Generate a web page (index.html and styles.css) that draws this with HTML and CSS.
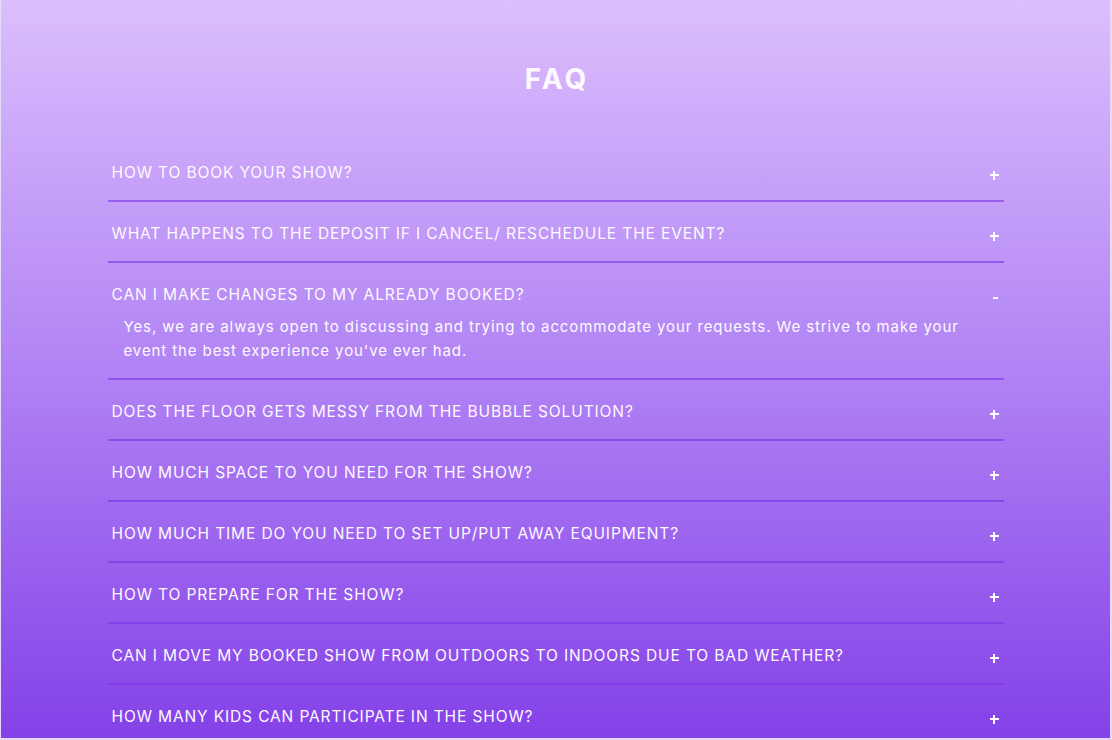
FILE: index.html
```html
<!DOCTYPE html>
<html lang="en">
<head>
<meta charset="utf-8">
<title>FAQ</title>
<link rel="stylesheet" href="styles.css">
</head>
<body>
<div class="page">
  <section class="faq">
    <h1 class="faq-title">FAQ</h1>
    <div class="faq-list">
      <div class="faq-item">
        <div class="faq-q"><span class="q-text">HOW TO BOOK YOUR SHOW?</span><span class="icon plus"></span></div>
      </div>
      <div class="faq-item">
        <div class="faq-q"><span class="q-text">WHAT HAPPENS TO THE DEPOSIT IF I CANCEL/ RESCHEDULE THE EVENT?</span><span class="icon plus"></span></div>
      </div>
      <div class="faq-item open">
        <div class="faq-q"><span class="q-text">CAN I MAKE CHANGES TO MY ALREADY BOOKED?</span><span class="icon minus"></span></div>
        <p class="faq-a">Yes, we are always open to discussing and trying to accommodate your requests. We strive to make your event the best experience you've ever had.</p>
      </div>
      <div class="faq-item">
        <div class="faq-q"><span class="q-text">DOES THE FLOOR GETS MESSY FROM THE BUBBLE SOLUTION?</span><span class="icon plus"></span></div>
      </div>
      <div class="faq-item">
        <div class="faq-q"><span class="q-text">HOW MUCH SPACE TO YOU NEED FOR THE SHOW?</span><span class="icon plus"></span></div>
      </div>
      <div class="faq-item">
        <div class="faq-q"><span class="q-text">HOW MUCH TIME DO YOU NEED TO SET UP/PUT AWAY EQUIPMENT?</span><span class="icon plus"></span></div>
      </div>
      <div class="faq-item">
        <div class="faq-q"><span class="q-text">HOW TO PREPARE FOR THE SHOW?</span><span class="icon plus"></span></div>
      </div>
      <div class="faq-item">
        <div class="faq-q"><span class="q-text">CAN I MOVE MY BOOKED SHOW FROM OUTDOORS TO INDOORS DUE TO BAD WEATHER?</span><span class="icon plus"></span></div>
      </div>
      <div class="faq-item">
        <div class="faq-q"><span class="q-text">HOW MANY KIDS CAN PARTICIPATE IN THE SHOW?</span><span class="icon plus"></span></div>
      </div>
    </div>
  </section>
</div>
</body>
</html>
```
FILE: styles.css
```css
* { box-sizing: border-box; }
html, body { margin: 0; padding: 0; }
body {
  font-family: "Inter", "Open Sans", "Liberation Sans", sans-serif;
  color: #fdf9ff;
  overflow: hidden;
}
.page {
  width: 1112px;
  height: 740px;
  background: linear-gradient(180deg, #dcbefd 0%, #b183f4 50%, #8441e8 100%);
  border-left: 1px solid #e6dcf7;
  border-right: 2px solid #e6dcf7;
  border-bottom: 2px solid #e6dcf7;
  overflow: hidden;
}
.faq {
  width: 896px;
  margin: 0 auto;
  padding-top: 59px;
}
.faq-title {
  margin: 0 0 42px;
  text-align: center;
  font-size: 28px;
  line-height: 40px;
  font-weight: 700;
  letter-spacing: 3px;
  padding-left: 3px;
}
.faq-item {
  border-bottom: 2px solid rgba(120, 50, 230, 0.6);
}
.faq-q {
  display: flex;
  align-items: center;
  justify-content: space-between;
  padding: 22px 5px 17px 4px;
  height: 59px;
}
.q-text {
  font-size: 15.5px;
  line-height: 20px;
  font-weight: 400;
  letter-spacing: 0.88px;
}
.icon {
  position: relative;
  width: 9px;
  height: 9px;
  margin-top: 4px;
  flex: none;
}
.icon::before, .icon::after {
  content: "";
  position: absolute;
  background: #fff;
}
.plus::before { left: 0; top: 3.4px; width: 9px; height: 2.4px; }
.plus::after { left: 3.3px; top: 0; width: 2.4px; height: 9px; }
.minus::before { left: 3px; top: 4px; width: 5px; height: 2.2px; }
.minus::after { display: none; }
.open .faq-q { height: auto; padding-bottom: 0; }
.faq-a {
  margin: 10px 0 0;
  padding: 0 40px 15px 16px;
  font-size: 15px;
  line-height: 24px;
  font-weight: 400;
  letter-spacing: 0.9px;
}
```
